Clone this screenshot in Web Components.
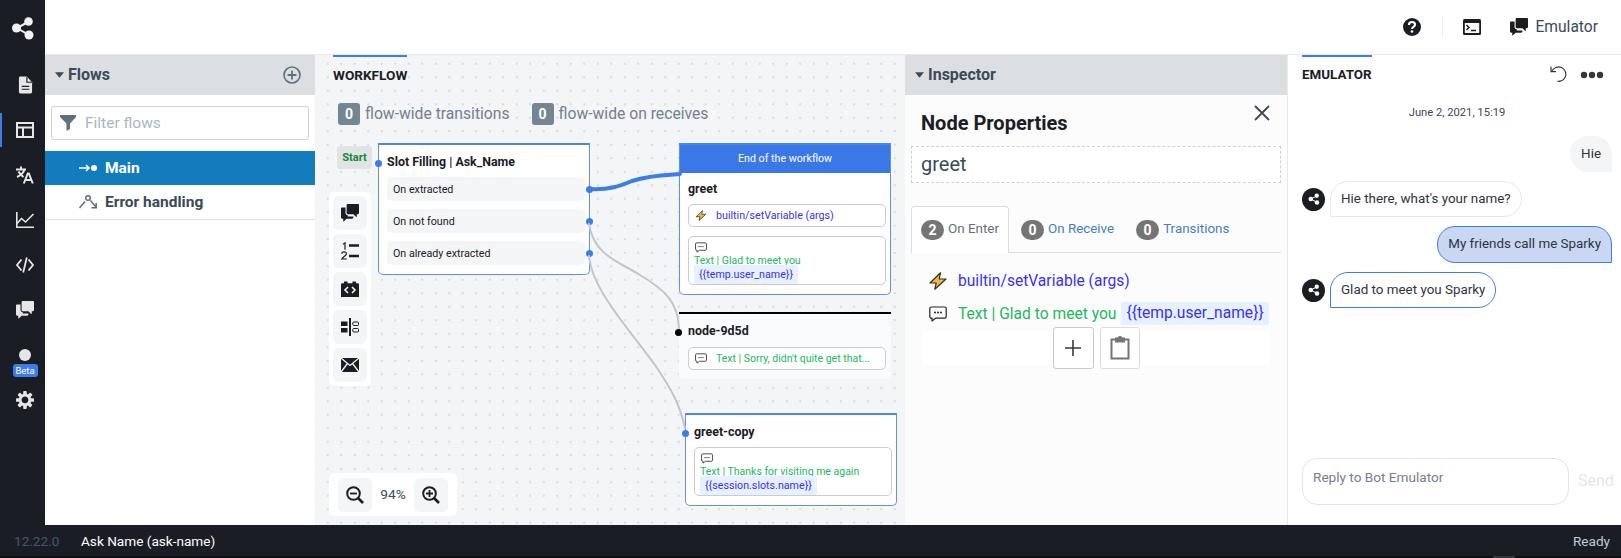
<!DOCTYPE html>
<html>
<head>
<meta charset="utf-8">
<title>Studio</title>
<style>
  html, body { margin: 0; height: 100%; overflow: hidden; background: #fff; }
  body { font-family: Roboto, "Liberation Sans", sans-serif; color: #182026; }
</style>
</head>
<body>

<app-shell>
  <side-nav slot="nav"></side-nav>
  <top-bar slot="top"></top-bar>
  <flows-panel></flows-panel>
  <workflow-canvas>
    <flow-node style="left:63px;top:88px;width:212px" heading="Slot Filling | Ask_Name" selected port="#3b7de9">
      <node-row port="#3b7de9">On extracted</node-row>
      <node-row port="#3b7de9">On not found</node-row>
      <node-row port="#3b7de9">On already extracted</node-row>
    </flow-node>
    <flow-node style="left:364px;top:88px;width:212px" heading="greet" selected banner="End of the workflow">
      <node-action icon="bolt"><span class="say">builtin/setVariable (args)</span></node-action>
      <node-action style="margin-top:1px" stacked icon="speech"><span class="txt">Text | Glad to meet you</span><span class="tag">{{temp.user_name}}</span></node-action>
    </flow-node>
    <flow-node style="left:364px;top:257px;width:212px" heading="node-9d5d" port="#000">
      <node-action icon="speech"><span class="txt">Text | Sorry, didn't quite get that...</span></node-action>
    </flow-node>
    <flow-node style="left:370px;top:358px;width:212px" heading="greet-copy" selected port="#3b7de9">
      <node-action stacked icon="speech"><span class="txt">Text | Thanks for visiting me again</span><span class="tag">{{session.slots.name}}</span></node-action>
    </flow-node>
  </workflow-canvas>
  <inspector-panel></inspector-panel>
  <emulator-panel></emulator-panel>
  <status-bar slot="status"></status-bar>
</app-shell>

<script>
const ICONS = {
  logo: '<svg viewBox="0 0 24 24" fill="currentColor"><path d="M17 6L6 12l12 7" fill="none" stroke="currentColor" stroke-width="2"/><circle cx="17.500" cy="5.500" r="4.300"/><circle cx="5.500" cy="12" r="4.500"/><circle cx="18" cy="19" r="4.500"/></svg>',
  doc: '<svg viewBox="0 0 16 18"><path fill="currentColor" d="M9.500 0H2.500C1.600 0 1 .7 1 1.500v15c0 .8.600 1.500 1.500 1.500h11c.9 0 1.500-.7 1.500-1.500V6z"/><path fill="none" stroke="#1a1e24" stroke-width="1.200" d="M9.500 0v6H15M4 10.500h8M4 13.500h8"/></svg>',
  layout: '<svg viewBox="0 0 18 16"><path fill="none" stroke="currentColor" stroke-width="2" d="M1 1h16v14H1zM1 5.500h16M7 5.500V15"/></svg>',
  translate: '<svg viewBox="0 0 18 18" fill="none" stroke="currentColor" stroke-width="2"><path d="M0 3.500h10M5 .5v3M8.500 3.500C7.500 7 4.500 9.500 1 11M2.500 5.500c1 2 3 4 5 5.500"/><path d="M7.800 17.500l4-10h1l4 10M9.500 14h6"/></svg>',
  chart: '<svg viewBox="0 0 18 16" fill="none" stroke="currentColor" stroke-width="1.600"><path d="M.8 0v15.200H18"/><path d="M1 11.500l4.500-5 4 3.500L17.500 2"/></svg>',
  code: '<svg viewBox="0 0 18 16" fill="none" stroke="currentColor" stroke-width="1.800"><path d="M5.500 2.500L1 8l4.500 5.500M12.500 2.500L17 8l-4.500 5.500M10.800 .5L7.200 15.500"/></svg>',
  chat: '<svg viewBox="0 0 16 16" fill="currentColor"><path d="M6 10c-1.100 0-2-.9-2-2V3H1c-.5 0-1 .5-1 1v8c0 .5.500 1 1 1h1v2c0 .55.320.68.700.3L5 13h5c.500 0 1-.5 1-1v-1.040c-.030.010-.070.040-.100.040H6zm9-10H6c-.550 0-1 .450-1 1v7c0 .550.450 1 1 1h5l2.300 2.300c.380.380.700.250.700-.3V9h1c.500 0 1-.450 1-1V1c0-.550-.450-1-1-1z"/></svg>',
  cog: '<svg viewBox="0 0 16 16" fill="currentColor"><path fill-rule="evenodd" d="M15.190 6.390h-1.850c-.110-.37-.270-.71-.450-1.040l1.360-1.360c.310-.31.310-.82 0-1.130l-1.130-1.130a.803.803 0 0 0-1.130 0l-1.360 1.360c-.330-.17-.670-.33-1.040-.44V.790c0-.44-.360-.8-.800-.8h-1.600c-.440 0-.8.360-.8.800v1.860c-.390.120-.750.280-1.100.470l-1.300-1.300c-.300-.3-.790-.3-1.090 0L1.820 2.910c-.300.300-.300.790 0 1.090l1.300 1.300c-.190.350-.360.710-.470 1.100H.790c-.440 0-.8.360-.8.800v1.600c0 .440.360.8.800.8h1.850c.110.370.270.710.450 1.040l-1.360 1.360c-.310.310-.310.820 0 1.130l1.130 1.130c.310.310.820.310 1.130 0l1.360-1.360c.330.180.670.330 1.040.44v1.860c0 .440.360.8.800.8h1.600c.440 0 .8-.360.8-.8v-1.860c.390-.120.750-.280 1.100-.470l1.300 1.300c.300.300.790.300 1.090 0l1.090-1.090c.300-.3.300-.790 0-1.090l-1.300-1.300c.190-.350.360-.710.470-1.100h1.850c.440 0 .8-.360.8-.8v-1.600a.816.816 0 0 0-.810-.79zm-7.200 4.600c-1.660 0-3-1.340-3-3s1.340-3 3-3 3 1.340 3 3-1.340 3-3 3z"/></svg>',
  help: '<svg viewBox="0 0 16 16"><circle cx="8" cy="8" r="8" fill="currentColor"/><path fill="none" stroke="#fff" stroke-width="1.900" d="M5.300 6.200C5.300 4.600 6.500 3.600 8 3.600s2.700.9 2.700 2.300c0 2-2.700 1.900-2.700 3.900"/><circle cx="8" cy="12" r="1.200" fill="#fff"/></svg>',
  terminal: '<svg viewBox="0 0 18 16"><rect width="18" height="16" rx="1.500" fill="currentColor"/><rect x="1.800" y="4" width="14.400" height="10" fill="#fff"/><path fill="none" stroke="currentColor" stroke-width="1.500" d="M3.500 6l2.500 2.500L3.500 11M8 11.500h5"/></svg>',
  filter: '<svg viewBox="0 0 16 16" fill="currentColor"><path d="M0 0h16v2L10 8.500V14l-3.500 2V8.500L0 2z"/></svg>',
  caret: '<svg viewBox="0 0 10 6" fill="currentColor"><path d="M0 0h10L5 6z"/></svg>',
  plusCircle: '<svg viewBox="0 0 18 18" fill="none" stroke="currentColor" stroke-width="1.600"><circle cx="9" cy="9" r="8"/><path stroke-width="1.800" d="M9 4.500v9M4.500 9h9"/></svg>',
  main: '<svg viewBox="0 0 18 12"><path fill="none" stroke="currentColor" stroke-width="1.500" d="M0 6h10M7 3l3 3-3 3"/><circle cx="15" cy="6" r="3" fill="currentColor"/></svg>',
  errorFlow: '<svg viewBox="0 0 18 14" fill="none" stroke="currentColor" stroke-width="1.500"><circle cx="9" cy="3" r="2.300"/><path d="M.5 13L6 6.500M11.500 5.500L17 12M17.200 8v4.800h-4.800"/></svg>',
  numbered: '<svg viewBox="0 0 18 18" fill="none" stroke="currentColor"><path stroke-width="1.200" d="M2 2.200L4 .8v7"/><path stroke-width="1.200" d="M.8 11.800c0-2.600 4.600-2.600 4.600 0 0 1.700-3 2.700-4.600 5.200h5"/><path stroke-width="2.300" d="M8 3.500h10M8 14h10"/></svg>',
  codeBlock: '<svg viewBox="0 0 18 16"><path fill="currentColor" d="M0 3.500C0 2.800.5 2.200 1.200 2.200H3V.5h3.500v1.700h5V.5H15v1.700h1.800c.7 0 1.200.6 1.200 1.300V16H0z"/><path fill="none" stroke="#f4f5f7" stroke-width="1.600" d="M7 6L4 9l3 3M11 6l3 3-3 3"/></svg>',
  split: '<svg viewBox="0 0 18 18"><rect y="3.500" width="6.500" height="4.500" fill="currentColor"/><rect y="10" width="6.500" height="4.500" fill="currentColor"/><rect x="8" width="2" height="18" fill="currentColor"/><rect x="11.800" y="4" width="5.700" height="3.500" rx="1" fill="none" stroke="currentColor"/><rect x="11.800" y="10.500" width="5.700" height="3.500" rx="1" fill="none" stroke="currentColor"/></svg>',
  mail: '<svg viewBox="0 0 18 14"><rect width="18" height="14" fill="currentColor"/><path fill="none" stroke="#f4f5f7" stroke-width="1.300" d="M0 0l9 7.500L18 0M0 14l6.500-8.500M18 14l-6.500-8.500"/></svg>',
  zoomOut: '<svg viewBox="0 0 18 18" fill="none" stroke="currentColor"><circle cx="7.500" cy="7.500" r="6.300" stroke-width="2"/><path stroke-width="2.600" d="M12 12l5 5"/><path stroke-width="1.800" d="M4 7.500h7"/></svg>',
  zoomIn: '<svg viewBox="0 0 18 18" fill="none" stroke="currentColor"><circle cx="7.500" cy="7.500" r="6.300" stroke-width="2"/><path stroke-width="2.600" d="M12 12l5 5"/><path stroke-width="1.800" d="M4 7.500h7M7.500 4v7"/></svg>',
  bolt: '<svg viewBox="0 0 18 18"><path fill="#f4b73b" stroke="#33302a" stroke-width="1.200" stroke-linejoin="round" d="M11.500 .8L1 11h6.200L5.800 17.200 17 7h-6.800z"/></svg>',
  speech: '<svg viewBox="0 0 18 16"><path fill="#fff" stroke="#222" stroke-width="1.200" stroke-linejoin="round" d="M2.500 1h13c.9 0 1.700.7 1.700 1.600v8c0 .9-.8 1.600-1.700 1.600H6.500L3 15v-2.800h-.5c-.9 0-1.700-.7-1.700-1.600v-8C.8 1.700 1.600 1 2.500 1z"/><circle cx="6" cy="6.600" r="1" fill="#222"/><circle cx="9" cy="6.600" r="1" fill="#222"/><circle cx="12" cy="6.600" r="1" fill="#222"/></svg>',
  close: '<svg viewBox="0 0 16 16" fill="none" stroke="currentColor" stroke-width="1.800"><path d="M1 1l14 14M15 1L1 15"/></svg>',
  plus: '<svg viewBox="0 0 16 16" fill="none" stroke="currentColor" stroke-width="1.600"><path d="M8 0v16M0 8h16"/></svg>',
  clipboard: '<svg viewBox="0 0 20 24" fill="none" stroke="currentColor" stroke-width="2"><path d="M6 3.500H1.500v19h17v-19H14"/><path fill="currentColor" d="M6 5.500V2.500h2.500a1.500 1.500 0 0 1 3 0H14v3z"/></svg>',
  undo: '<svg viewBox="0 0 18 16" fill="none" stroke="currentColor" stroke-width="1.200"><path d="M1.500 5.500C3.500 1.500 8 0 11.500 1.500c4 1.800 5.500 6.500 3.500 10-1.500 2.800-4.500 4-7.500 3.800"/><path d="M1 .8v4.900h5"/></svg>',
  more: '<svg viewBox="0 0 24 8" fill="currentColor"><circle cx="4" cy="4" r="3.200"/><circle cx="12" cy="4" r="3.200"/><circle cx="20" cy="4" r="3.200"/></svg>'
};

class AppIcon extends HTMLElement {
  constructor() {
    super();
    this.attachShadow({ mode: "open" });
  }
  connectedCallback() {
    const w = this.getAttribute("size") || 16;
    const h = this.getAttribute("height") || w;
    this.shadowRoot.innerHTML = `
      <style>
        :host { display: inline-flex; flex: none; width: ${w}px; height: ${h}px; }
        svg { width: 100%; height: 100%; display: block; overflow: visible; }
      </style>
      ${ICONS[this.getAttribute("name")]}`;
  }
}
customElements.define("app-icon", AppIcon);

class AppShell extends HTMLElement {
  constructor() {
    super();
    this.attachShadow({ mode: "open" }).innerHTML = `
      <style>
        :host { display: flex; flex-direction: column; height: 558px; }
        .upper { display: flex; height: 525px; }
        .right { flex: 1; display: flex; flex-direction: column; min-width: 0; }
        .panels { flex: 1; display: flex; min-height: 0; }
      </style>
      <div class="upper">
        <slot name="nav"></slot>
        <div class="right">
          <slot name="top"></slot>
          <div class="panels"><slot></slot></div>
        </div>
      </div>
      <slot name="status"></slot>`;
  }
}
customElements.define("app-shell", AppShell);

class NavItem extends HTMLElement {
  constructor() {
    super();
    this.attachShadow({ mode: "open" }).innerHTML = `
      <style>
        :host { display: flex; align-items: center; height: 45px; color: #e6e6e6; }
        .tile { width: 45px; height: 34px; box-sizing: border-box; padding-left: 5px; display: flex; align-items: center; justify-content: center; }
        :host([active]) .tile { box-shadow: inset 2px 0 0 #3b7de9; }
      </style>
      <div class="tile"><slot></slot></div>`;
  }
}
customElements.define("nav-item", NavItem);

class SideNav extends HTMLElement {
  constructor() {
    super();
    this.attachShadow({ mode: "open" }).innerHTML = `
      <style>
        :host { display: flex; flex-direction: column; flex: none; width: 45px; background: #1a1e24; }
        .logo { height: 62.500px; padding-top: 16px; box-sizing: border-box; display: flex; justify-content: center; color: #f2f2f2; }
        .logo app-icon { margin-left: 1px; }
        .beta { height: 45px; display: flex; flex-direction: column; align-items: center; padding: 16px 0 0 5px; box-sizing: border-box; }
        .dot { width: 12px; height: 12px; border-radius: 50%; background: #e6e6e6; }
        .badge { margin-top: 3px; width: 25px; height: 13px; border-radius: 3px; background: #3b7de9; color: #fff; font: 400 9.500px/13px Roboto, sans-serif; text-align: center; }
      </style>
      <div class="logo"><app-icon name="logo" size="24"></app-icon></div>
      <nav-item><app-icon name="doc" size="15" height="18"></app-icon></nav-item>
      <nav-item active><app-icon name="layout" size="18" height="16"></app-icon></nav-item>
      <nav-item><app-icon name="translate" size="18"></app-icon></nav-item>
      <nav-item><app-icon name="chart" size="18" height="16"></app-icon></nav-item>
      <nav-item><app-icon name="code" size="18" height="16"></app-icon></nav-item>
      <nav-item><app-icon name="chat" size="18"></app-icon></nav-item>
      <div class="beta"><div class="dot"></div><div class="badge">Beta</div></div>
      <nav-item><app-icon name="cog" size="18"></app-icon></nav-item>`;
  }
}
customElements.define("side-nav", SideNav);

class TopBar extends HTMLElement {
  constructor() {
    super();
    this.attachShadow({ mode: "open" }).innerHTML = `
      <style>
        :host { display: flex; flex: none; align-items: center; justify-content: flex-end; height: 54px; border-bottom: 1px solid #e8e9ea; padding-right: 23px; color: #1a1e24; }
        .sep { width: 1px; height: 22px; background: #eeeeee; margin: 0 20px 0 21px; }
        .chat { margin: 0 7px 0 29px; }
        span { font-size: 15.600px; color: #394b59; }
      </style>
      <app-icon name="help" size="18"></app-icon>
      <div class="sep"></div>
      <app-icon name="terminal" size="18" height="16"></app-icon>
      <app-icon class="chat" name="chat" size="18"></app-icon>
      <span>Emulator</span>`;
  }
}
customElements.define("top-bar", TopBar);

class PanelHeader extends HTMLElement {
  constructor() {
    super();
    this.attachShadow({ mode: "open" }).innerHTML = `
      <style>
        :host { display: flex; align-items: center; flex: none; height: 40px; background: #dcdfe2; padding: 0 14px 0 10px; color: #394b59; font: 700 16px Roboto, sans-serif; }
        .caret { margin-right: 4px; }
        .title { flex: 1; margin-top: -2px; }
      </style>
      <app-icon class="caret" name="caret" size="9" height="6"></app-icon>
      <div class="title"><slot></slot></div>
      <slot name="actions"></slot>`;
  }
}
customElements.define("panel-header", PanelHeader);

class FlowRow extends HTMLElement {
  constructor() {
    super();
    this.attachShadow({ mode: "open" }).innerHTML = `
      <style>
        :host { display: flex; align-items: center; gap: 8px; height: 34px; box-sizing: border-box; padding: 0 0 1px 34px; font: 700 15.500px Roboto, sans-serif; color: #394b59; }
        :host([active]) { background: #137cbd; color: #fff; }
        ::slotted(app-icon) { color: #5c7080; margin-top: 1px; }
        :host([active]) ::slotted(app-icon) { color: #fff; }
      </style>
      <slot name="icon"></slot><slot></slot>`;
  }
}
customElements.define("flow-row", FlowRow);

class FlowsPanel extends HTMLElement {
  constructor() {
    super();
    this.attachShadow({ mode: "open" }).innerHTML = `
      <style>
        :host { display: flex; flex-direction: column; flex: none; width: 270px; background: #fff; }
        .filter { display: flex; align-items: center; gap: 9px; height: 34px; box-sizing: border-box; margin: 11px 6px; padding: 0 0 1px 8px; border: 1px solid #cfd1d3; border-radius: 3px; color: #a7b6c2; font: 400 15.500px Roboto, sans-serif; }
        .filter app-icon { color: #5c7080; margin-top: 1px; }
        .list { border-bottom: 1px solid #dddfe1; }
        .add { color: #5c7080; }
      </style>
      <panel-header>Flows<app-icon class="add" slot="actions" name="plusCircle" size="18"></app-icon></panel-header>
      <div class="filter"><app-icon name="filter" size="16"></app-icon>Filter flows</div>
      <div class="list">
        <flow-row active><app-icon slot="icon" name="main" size="18" height="12"></app-icon>Main</flow-row>
        <flow-row><app-icon slot="icon" name="errorFlow" size="18" height="14"></app-icon>Error handling</flow-row>
      </div>`;
  }
}
customElements.define("flows-panel", FlowsPanel);

class TabTitle extends HTMLElement {
  constructor() {
    super();
    this.attachShadow({ mode: "open" }).innerHTML = `
      <style>
        :host { display: inline-block; box-sizing: border-box; height: 40px; border-top: 2px solid #3b7de9; font: 700 13.400px/36px Roboto, sans-serif; color: #182026; }
      </style>
      <slot></slot>`;
  }
}
customElements.define("tab-title", TabTitle);

class NodeRow extends HTMLElement {
  constructor() {
    super();
    this.attachShadow({ mode: "open" }).innerHTML = `
      <style>
        :host { display: block; position: relative; height: 24px; background: #f4f5f7; border-radius: 5px; padding-left: 6px; font: 400 10.700px/25px Roboto, sans-serif; color: #182026; }
        i { position: absolute; right: -7.500px; top: 8.500px; width: 7px; height: 7px; border-radius: 50%; }
      </style>
      <slot></slot><i></i>`;
    this.shadowRoot.querySelector("i").style.background = this.getAttribute("port");
  }
}
customElements.define("node-row", NodeRow);

class NodeAction extends HTMLElement {
  constructor() {
    super();
    this.attachShadow({ mode: "open" });
  }
  connectedCallback() {
    this.shadowRoot.innerHTML = `
      <style>
        :host { display: flex; align-items: center; gap: 9px; box-sizing: border-box; min-height: 23px; background: #fff; border: 1px solid #c9cdd1; border-radius: 5px; padding: 0 0 0 6px; font: 400 10.700px/13px Roboto, sans-serif; }
        :host([stacked]) { display: block; height: 49px; padding: 5px 0 0 5px; overflow: hidden; }
        app-icon { display: flex; }
        :host([stacked]) app-icon { margin: 0 0 1px 1px; }
        ::slotted(.say) { color: #3a32ee; }
        ::slotted(.txt) { color: #22b85c; font-size: 10.500px; }
        ::slotted(.tag) { display: table; color: #3a32ee; background: #e6f0ff; padding: 3px 5px; margin-top: -2px; position: relative; border-radius: 2px; }
      </style>
      <app-icon name="${this.getAttribute("icon")}" size="12" height="11"></app-icon><slot></slot>`;
  }
}
customElements.define("node-action", NodeAction);

class FlowNode extends HTMLElement {
  constructor() {
    super();
    this.attachShadow({ mode: "open" }).innerHTML = `
      <style>
        :host { position: absolute; display: block; box-sizing: border-box; background: #fafbfc; border-top: 2px solid #000; border-radius: 0 0 5px 5px; }
        :host([selected]) { background: #fff; border: 1px solid #5d92ee; border-top: 2px solid #4a86ea; }
        .banner { height: 28px; margin: 0; background: #3b78e7; color: #fff; font: 400 10.700px/28px Roboto, sans-serif; text-align: center; }
        .title { height: 32px; padding-left: 8px; font: 700 12.400px/34px Roboto, sans-serif; color: #182026; }
        .banner + .title { height: 31px; line-height: 31px; }
        .body { display: flex; flex-direction: column; gap: 8px; padding: 0 4px 9px 8px; }
        :host(:not([selected])) .title { height: 33px; padding-left: 9px; }
        :host(:not([selected])) .body { padding: 0 5px 9px 9px; }
        i { position: absolute; left: -4.500px; top: 15px; width: 7px; height: 7px; border-radius: 50%; }
      </style>
      <div class="banner"></div>
      <div class="title"></div>
      <div class="body"><slot></slot></div>
      <i></i>`;
  }
  connectedCallback() {
    const root = this.shadowRoot;
    const banner = this.getAttribute("banner");
    if (banner) root.querySelector(".banner").textContent = banner;
    else root.querySelector(".banner").remove();
    root.querySelector(".title").textContent = this.getAttribute("heading");
    const port = this.getAttribute("port");
    if (port) root.querySelector("i").style.background = port;
    else root.querySelector("i").remove();
  }
}
customElements.define("flow-node", FlowNode);

class ToolButton extends HTMLElement {
  constructor() {
    super();
    this.attachShadow({ mode: "open" }).innerHTML = `
      <style>
        :host { display: flex; align-items: center; justify-content: center; width: 34px; height: 34px; background: #f4f5f7; border-radius: 6px; color: #1a1e24; }
      </style>
      <slot></slot>`;
  }
}
customElements.define("tool-button", ToolButton);

class WorkflowCanvas extends HTMLElement {
  constructor() {
    super();
    this.attachShadow({ mode: "open" }).innerHTML = `
      <style>
        :host { display: block; position: relative; flex: none; width: 590px; overflow: hidden; background-color: #f4f5f7;
          background-image: radial-gradient(circle, #d6d9dd .8px, transparent 1.100px); background-size: 13.500px 13.500px; background-position: 6px 2px; }
        .head { padding-left: 18px; height: 48px; }
        .head tab-title { line-height: 37px; font-size: 13.600px; }
        .wide { display: flex; align-items: center; height: 22px; padding-left: 23px; color: #738091; font: 400 15.700px Roboto, sans-serif; }
        .wide span:not(.count) { margin-top: -2px; }
        .count { width: 22px; height: 22px; margin-right: 5px; background: #738694; border-radius: 3px; color: #fff; font: 700 14px/22px Roboto, sans-serif; text-align: center; }
        .count.second { margin-left: 22px; }
        .tools { position: absolute; left: 14px; top: 137px; padding: 4px; background: #fff; border-radius: 5px; display: flex; flex-direction: column; gap: 4px; }
        .zoom { position: absolute; left: 14px; bottom: 9px; width: 128px; height: 43px; box-sizing: border-box; padding: 4px 9px; background: #fff; border-radius: 5px; display: flex; align-items: center; justify-content: space-between; font: 400 13.700px Roboto, sans-serif; color: #394b59; }
        .zoom span { margin-top: -2px; }
        .start { position: absolute; left: 22px; top: 91px; width: 35px; height: 23px; background: #e1e3e5; border-radius: 3px; color: #0f8a2f; font: 700 11px/23px Roboto, sans-serif; text-align: center; }
        svg { position: absolute; left: 0; top: 0; width: 590px; height: 470px; pointer-events: none; z-index: 1; }
      </style>
      <div class="head"><tab-title>WORKFLOW</tab-title></div>
      <div class="wide">
        <span class="count">0</span><span>flow-wide transitions</span>
        <span class="count second">0</span><span>flow-wide on receives</span>
      </div>
      <div class="start">Start</div>
      <slot></slot>
      <div class="tools">
        <tool-button><app-icon name="chat" size="18"></app-icon></tool-button>
        <tool-button><app-icon name="numbered" size="18"></app-icon></tool-button>
        <tool-button><app-icon name="codeBlock" size="18" height="16"></app-icon></tool-button>
        <tool-button><app-icon name="split" size="18"></app-icon></tool-button>
        <tool-button><app-icon name="mail" size="18" height="14"></app-icon></tool-button>
      </div>
      <div class="zoom">
        <tool-button><app-icon name="zoomOut" size="18"></app-icon></tool-button>
        <span>94%</span>
        <tool-button><app-icon name="zoomIn" size="18"></app-icon></tool-button>
      </div>
      <svg viewBox="315 55 590 470" fill="none" stroke-linecap="round">
        <path stroke="#c2c6ca" stroke-width="2" d="M589 224C594 256 620 262 640 275C665 290 678 302 679 328"/>
        <path stroke="#c2c6ca" stroke-width="2" d="M589 256C592 290 630 330 655 365C672 390 680 405 685 428"/>
        <path stroke="#3b7de9" stroke-width="4" d="M589 189C610 190 620 186 632 181C650 175 665 175 680 174"/>
      </svg>`;
  }
}
customElements.define("workflow-canvas", WorkflowCanvas);

class InspectorTab extends HTMLElement {
  constructor() {
    super();
    this.attachShadow({ mode: "open" }).innerHTML = `
      <style>
        :host { display: flex; align-items: center; gap: 4px; height: 46px; box-sizing: border-box; padding: 0 9px; color: #3f80bb; font: 400 13.400px Roboto, sans-serif; border: 1px solid transparent; border-bottom: 0; }
        :host([active]) { background: #fff; color: #5c7080; border-color: #dcdee0; border-radius: 4px 4px 0 0; height: 47px; margin-bottom: -1px; }
        b { width: 23px; height: 20px; border-radius: 10px; background: #757575; color: #fff; font: 700 14px/20px Roboto, sans-serif; text-align: center; }
        span { margin-top: -3px; }
      </style>
      <b></b><span><slot></slot></span>`;
    this.shadowRoot.querySelector("b").textContent = this.getAttribute("count");
  }
}
customElements.define("inspector-tab", InspectorTab);

class InspectorPanel extends HTMLElement {
  constructor() {
    super();
    this.attachShadow({ mode: "open" }).innerHTML = `
      <style>
        :host { display: flex; flex-direction: column; flex: none; width: 382px; background: #fcfcfc; }
        .body { padding: 0 6px; }
        .heading { display: flex; justify-content: space-between; height: 51px; padding: 0 11px 0 10px; box-sizing: border-box; }
        h2 { margin: 16px 0 0; font: 700 20px/24px Roboto, sans-serif; color: #182026; }
        .close { margin-top: 10px; color: #394b59; }
        .name { height: 37px; box-sizing: border-box; border: 1px dashed #cfd1d3; background: #fff; padding-left: 9px; font: 400 20px/34px Roboto, sans-serif; color: #394b59; }
        .tabs { display: flex; gap: 2px; margin-top: 23px; height: 46px; border-bottom: 1px solid #dcdee0; }
        .row { display: flex; align-items: center; height: 33px; padding-left: 18px; font: 400 15.600px Roboto, sans-serif; }
        .row app-icon { margin-right: 11px; }
        .rows { padding-top: 11px; }
        .blue { color: #3a32ee; }
        .green { color: #22b85c; }
        .tag { margin-left: 5px; padding: 0 5px; height: 23px; line-height: 23px; background: #e6f0ff; color: #3a32ee; border-radius: 2px; }
        .bar { display: flex; align-items: center; justify-content: center; gap: 6px; height: 34px; margin: 1px 11px 0; background: #fff; }
        button { display: flex; align-items: center; justify-content: center; flex: none; width: 41px; height: 42px; padding: 0; background: #fff; border: 1px solid #c9c9c9; border-radius: 3px; color: #33383d; }
        button + button { width: 40px; border-color: #dcdcdc; color: #757575; }
      </style>
      <panel-header>Inspector</panel-header>
      <div class="body">
        <div class="heading"><h2>Node Properties</h2><app-icon class="close" name="close" size="16"></app-icon></div>
        <div class="name">greet</div>
        <div class="tabs">
          <inspector-tab active count="2">On Enter</inspector-tab>
          <inspector-tab count="0">On Receive</inspector-tab>
          <inspector-tab count="0">Transitions</inspector-tab>
        </div>
        <div class="rows">
          <div class="row blue"><app-icon name="bolt" size="18"></app-icon>builtin/setVariable (args)</div>
          <div class="row green"><app-icon name="speech" size="18" height="16"></app-icon>Text | Glad to meet you<span class="tag">{{temp.user_name}}</span></div>
        </div>
        <div class="bar">
          <button><app-icon name="plus" size="16"></app-icon></button>
          <button><app-icon name="clipboard" size="20" height="24"></app-icon></button>
        </div>
      </div>`;
  }
}
customElements.define("inspector-panel", InspectorPanel);

class ChatBubble extends HTMLElement {
  constructor() {
    super();
    this.attachShadow({ mode: "open" }).innerHTML = `
      <style>
        :host { display: flex; align-items: center; gap: 5px; font: 400 13.400px/16px Roboto, sans-serif; color: #2c3540; }
        :host([from="user"]) { justify-content: flex-end; }
        .avatar { display: flex; align-items: center; justify-content: center; width: 23px; height: 23px; border-radius: 50%; background: #1a1e24; color: #fff; }
        .text { box-sizing: border-box; height: 36px; padding: 9px 10px; border: 1px solid #e6e7e8; border-radius: 18px 18px 18px 0; background: #fff; }
        :host([from="user"]) .text { border-radius: 18px 18px 0 18px; background: #f4f5f7; border-color: #f4f5f7; }
        :host([accent]) .text { border-color: #3b7de9; }
        :host([from="user"][accent]) .text { background: #c9d7f3; height: 37px; }
      </style>
      <div class="avatar"><app-icon name="logo" size="12"></app-icon></div>
      <div class="text"><slot></slot></div>`;
    if (this.getAttribute("from") === "user") this.shadowRoot.querySelector(".avatar").remove();
  }
}
customElements.define("chat-bubble", ChatBubble);

class EmulatorPanel extends HTMLElement {
  constructor() {
    super();
    this.attachShadow({ mode: "open" }).innerHTML = `
      <style>
        :host { display: flex; flex-direction: column; flex: 1; min-width: 0; box-sizing: border-box; background: #fff; border-left: 1px solid #e8e9ea; padding: 0 9px 20px 14px; }
        .head { display: flex; align-items: flex-start; }
        .head .fill { flex: 1; }
        .undo { margin: 11px 12px 0 0; color: #33383d; }
        .more { margin: 16px 8px 0 0; color: #33383d; }
        .date { margin-top: 10px; text-align: center; font: 400 11.200px/16px Roboto, sans-serif; color: #394b59; }
        .msgs { flex: 1; display: flex; flex-direction: column; gap: 9px; margin-top: 15px; }
        .compose { display: flex; align-items: center; gap: 9px; }
        .box { flex: none; width: 267px; height: 47px; box-sizing: border-box; border: 1px solid #e3e4e5; border-radius: 15px; padding: 10px; font: 400 13.600px/16px Roboto, sans-serif; color: #738091; }
        .send { font: 400 16px Roboto, sans-serif; color: #e6e7e8; margin-top: -2px; }
      </style>
      <div class="head">
        <tab-title>EMULATOR</tab-title>
        <div class="fill"></div>
        <app-icon class="undo" name="undo" size="18" height="16"></app-icon>
        <app-icon class="more" name="more" size="24" height="8"></app-icon>
      </div>
      <div class="date">June 2, 2021, 15:19</div>
      <div class="msgs">
        <chat-bubble from="user">Hie</chat-bubble>
        <chat-bubble from="bot">Hie there, what's your name?</chat-bubble>
        <chat-bubble from="user" accent>My friends call me Sparky</chat-bubble>
        <chat-bubble from="bot" accent>Glad to meet you Sparky</chat-bubble>
      </div>
      <div class="compose"><div class="box">Reply to Bot Emulator</div><div class="send">Send</div></div>`;
  }
}
customElements.define("emulator-panel", EmulatorPanel);

class StatusBar extends HTMLElement {
  constructor() {
    super();
    this.attachShadow({ mode: "open" }).innerHTML = `
      <style>
        :host { display: block; flex: none; }
        .bar { display: flex; align-items: center; height: 31px; background: #1a1e24; padding: 0 11px 0 14px; font: 400 13.600px Roboto, sans-serif; color: #fff; }
        .ver { color: #3f5a75; width: 67px; }
        .fill { flex: 1; }
        .ready { color: #bfccd6; }
        .edge { height: 2px; background: #0e1013; display: flex; }
        .edge i { margin-left: 1493px; width: 22px; background: #33363a; }
      </style>
      <div class="bar"><span class="ver">12.22.0</span><span>Ask Name (ask-name)</span><span class="fill"></span><span class="ready">Ready</span></div>
      <div class="edge"><i></i></div>`;
  }
}
customElements.define("status-bar", StatusBar);
</script>
</body>
</html>
